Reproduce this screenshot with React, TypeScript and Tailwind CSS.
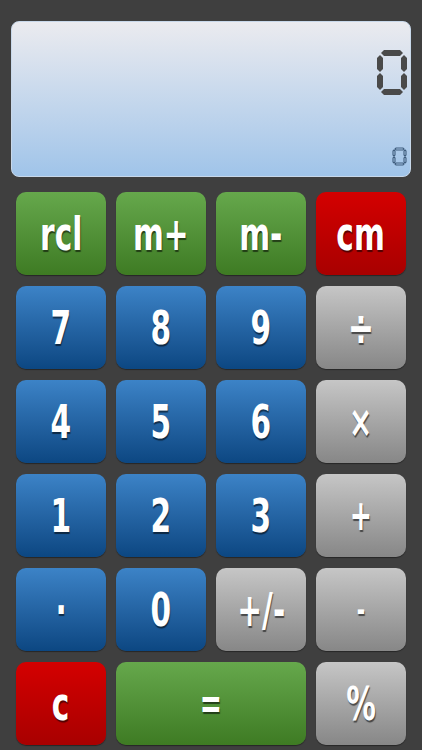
import React from 'react';

type Tone = 'green' | 'red' | 'blue' | 'gray';

interface Key {
  label: string;
  tone: Tone;
  wide?: boolean;
  size?: string;
}

const toneClass: Record<Tone, string> = {
  green: 'bg-gradient-to-b from-[#66a84c] to-[#3e7b23]',
  red: 'bg-gradient-to-b from-[#d40000] to-[#a80000]',
  blue: 'bg-gradient-to-b from-[#3c83c7] to-[#0c4782]',
  gray: 'bg-gradient-to-b from-[#c6c6c6] to-[#878787]',
};

const keys: Key[] = [
  { label: 'rcl', tone: 'green' },
  { label: 'm+', tone: 'green' },
  { label: 'm-', tone: 'green' },
  { label: 'cm', tone: 'red' },
  { label: '7', tone: 'blue' },
  { label: '8', tone: 'blue' },
  { label: '9', tone: 'blue' },
  { label: '÷', tone: 'gray', size: 'text-[50px] font-semibold' },
  { label: '4', tone: 'blue' },
  { label: '5', tone: 'blue' },
  { label: '6', tone: 'blue' },
  { label: '×', tone: 'gray', size: 'text-[44px] font-semibold' },
  { label: '1', tone: 'blue' },
  { label: '2', tone: 'blue' },
  { label: '3', tone: 'blue' },
  { label: '+', tone: 'gray', size: 'text-[42px] font-semibold' },
  { label: '·', tone: 'blue' },
  { label: '0', tone: 'blue' },
  { label: '+/-', tone: 'gray' },
  { label: '-', tone: 'gray', size: 'text-[32px] font-bold' },
  { label: 'c', tone: 'red' },
  { label: '=', tone: 'green', wide: true, size: 'text-[42px] font-bold' },
  { label: '%', tone: 'gray' },
];

// seven segment "0": top, upper sides, lower sides, bottom
function BigZero() {
  return (
    <svg width="30" height="47" viewBox="0 0 30 47" className="fill-[#4a4a4a]">
      <path d="M7 1 L23 1 L26 4 L23 7 L7 7 L4 4 Z" />
      <path d="M3 6 L6 9 L6 20 L3 23 L0 20 L0 9 Z" />
      <path d="M27 6 L30 9 L30 20 L27 23 L24 20 L24 9 Z" />
      <path d="M3 24 L6 27 L6 38 L3 41 L0 38 L0 27 Z" />
      <path d="M27 24 L30 27 L30 38 L27 41 L24 38 L24 27 Z" />
      <path d="M7 40 L23 40 L26 43 L23 46 L7 46 L4 43 Z" />
    </svg>
  );
}

function SmallZero() {
  return (
    <svg width="15" height="19" viewBox="0 0 15 19" className="fill-none stroke-[#3e5c7c]" strokeWidth="1.1">
      <path d="M4 1 L11 1 L12 2 L11 3 L4 3 L3 2 Z" />
      <path d="M2 3 L3 4 L3 8 L2 9 L1 8 L1 4 Z" />
      <path d="M13 3 L14 4 L14 8 L13 9 L12 8 L12 4 Z" />
      <path d="M2 10 L3 11 L3 15 L2 16 L1 15 L1 11 Z" />
      <path d="M13 10 L14 11 L14 15 L13 16 L12 15 L12 11 Z" />
      <path d="M4 16 L11 16 L12 17 L11 18 L4 18 L3 17 Z" />
    </svg>
  );
}

export default function App() {
  return (
    <div className="w-[422px] h-[750px] bg-[#3f3f3f] overflow-hidden">
      {/* Display */}
      <div className="pt-[21px] px-[11px]">
        <div className="h-[156px] rounded-[8px] bg-gradient-to-b from-[#ebebef] to-[#a0c4e9] border border-[#c8d8ea] flex flex-col items-end pr-[3px]">
          <div className="pt-[27px]">
            <BigZero />
          </div>
          <div className="mt-auto pb-[10px]">
            <SmallZero />
          </div>
        </div>
      </div>

      {/* Keypad */}
      <div className="mt-[15px] px-[16px] grid grid-cols-4 gap-x-[10px] gap-y-[11px] auto-rows-[83px]">
        {keys.map((k) => (
          <button
            key={k.label}
            className={`${toneClass[k.tone]} ${k.wide ? 'col-span-2' : ''} rounded-[10px] flex items-center justify-center text-white ${k.size ?? 'text-[47px] font-bold'} font-['DejaVu_Sans_Condensed','DejaVu_Sans',sans-serif] [text-shadow:1px_2px_1px_rgba(0,0,0,0.55)] shadow-[0_1px_1px_rgba(0,0,0,0.4)]`}
          >
            <span className="inline-block scale-x-[0.7] leading-none">{k.label}</span>
          </button>
        ))}
      </div>
    </div>
  );
}
